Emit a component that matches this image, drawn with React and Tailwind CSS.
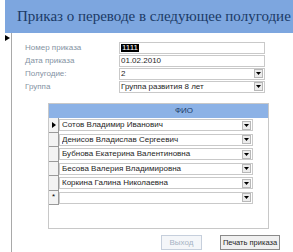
import React from "react";

const STUDENTS = [
  "Сотов Владимир Иванович",
  "Денисов Владислав Сергеевич",
  "Бубнова Екатерина Валентиновна",
  "Бесова Валерия Владимировна",
  "Коркина Галина Николаевна",
];

// tiny combo arrow button, Access style
const DropButton = () => (
  <span className="w-[9px] h-[9px] mr-[1px] border border-[#b8b8b8] bg-[#ececec] flex items-center justify-center shrink-0">
    <svg width="5" height="3" viewBox="0 0 5 3">
      <path d="M0 0h5L2.5 3z" fill="#000" />
    </svg>
  </span>
);

const Field = ({ label, children, combo }) => (
  <div className="flex items-center h-[13px]">
    <div className="w-[94px] text-[8px] text-[#8593a3] leading-none">{label}</div>
    <div className="w-[146px] h-[12px] border border-[#c9c9c9] bg-white flex items-center pl-[1px] text-[8px] text-[#1e1e1e] leading-none">
      <div className="flex-1 truncate">{children}</div>
      {combo && <DropButton />}
    </div>
  </div>
);

const App = () => {
  return (
    <div
      className="w-[293px] h-[252px] bg-white overflow-hidden flex flex-col"
      style={{ fontFamily: "'Liberation Sans', Arial, sans-serif" }}
    >
      {/* form header */}
      <div className="h-[33px] ml-[5px] bg-[#7da6df] flex items-center pl-[12px] shrink-0">
        <span
          className="text-[15px] text-[#1b3a66] whitespace-nowrap"
          style={{ fontFamily: "'Liberation Serif', 'Times New Roman', serif" }}
        >
          Приказ о переводе в следующее полугодие
        </span>
      </div>

      <div className="flex flex-1">
        {/* record selector */}
        <div className="w-[12px] border-r border-[#a9a9a9] pt-[2px] pl-[5px]">
          <svg width="5" height="6" viewBox="0 0 5 6">
            <path d="M0 0l5 3-5 3z" fill="#000" />
          </svg>
        </div>

        <div className="flex-1 flex flex-col pt-[8px] pl-[13px]">
          <Field label="Номер приказа">
            <span className="bg-black text-white px-[1px]">1111</span>
          </Field>
          <Field label="Дата приказа">01.02.2010</Field>
          <Field label="Полугодие:" combo>
            2
          </Field>
          <Field label="Группа" combo>
            Группа развития 8 лет
          </Field>

          {/* subform */}
          <div className="ml-[23px] mt-[10px] w-[221px] h-[126px] border border-[#c8c8c8] flex flex-col">
            <div className="h-[14px] bg-[#8cb2e6] flex items-center shrink-0">
              <span className="ml-[126px] text-[8px] text-[#1b3a66] leading-none">ФИО</span>
            </div>
            {[...STUDENTS, ""].map((name, i) => (
              <div key={i} className="flex h-[14.5px] shrink-0">
                <div className="w-[10px] border-r border-b border-[#9a9a9a] bg-[#f3f3f3] flex items-center justify-center">
                  {i === 0 && (
                    <svg width="4" height="6" viewBox="0 0 4 6">
                      <path d="M0 0l4 3-4 3z" fill="#000" />
                    </svg>
                  )}
                  {i === STUDENTS.length && (
                    <span className="text-[8px] leading-none text-black">*</span>
                  )}
                </div>
                <div className="w-[194px] h-[12px] mt-[1px] border border-[#c9c9c9] flex items-center pl-[2px] text-[8px] text-[#1e1e1e] leading-none">
                  <div className="flex-1 truncate">{name}</div>
                  <DropButton />
                </div>
              </div>
            ))}
          </div>

          {/* buttons */}
          <div className="flex ml-[136px] mt-[6px] gap-[18px]">
            <button className="w-[41px] h-[15px] border border-[#c6cfdc] bg-[#f4f6f9] text-[8px] text-[#a7b3c4] leading-none">
              Выход
            </button>
            <button className="w-[60px] h-[15px] px-0 border border-[#8a8a8a] bg-[#f0f0f0] text-[7.5px] text-[#1e1e1e] leading-none whitespace-nowrap">
              Печать приказа
            </button>
          </div>
        </div>
      </div>
    </div>
  );
};

export default App;
